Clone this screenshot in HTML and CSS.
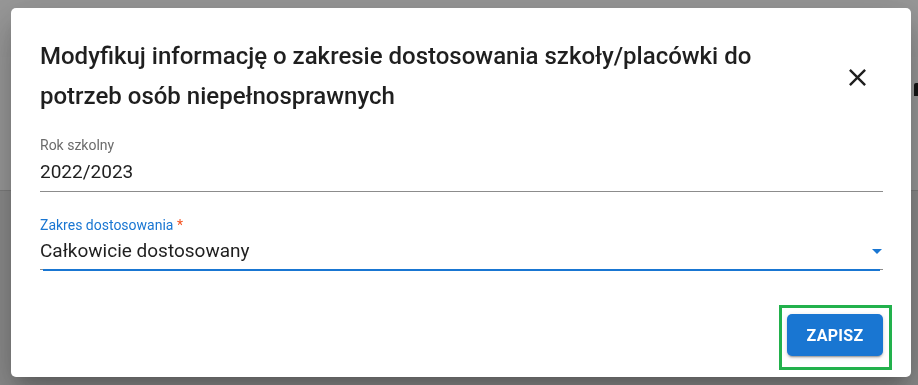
FILE: index.html
```html
<!DOCTYPE html>
<html lang="pl">
<head>
<meta charset="utf-8">
<link rel="stylesheet" href="styles.css">
</head>
<body>
<div class="page">
  <div class="page-top"></div>
  <div class="page-card"><span class="page-glyph"></span></div>
  <div class="page-rest"></div>
</div>
<div class="overlay">
  <div class="dialog">
    <div class="dialog-head">
      <h2 class="dialog-title">Modyfikuj informację o zakresie dostosowania szkoły/placówki do potrzeb osób niepełnosprawnych</h2>
      <button class="close-btn" aria-label="Zamknij">
        <svg viewBox="0 0 24 24" width="29" height="29"><path d="M19 6.41 17.59 5 12 10.59 6.41 5 5 6.41 10.59 12 5 17.59 6.41 19 12 13.41 17.59 19 19 17.59 13.41 12z" fill="#1f1f1f"/></svg>
      </button>
    </div>
    <div class="dialog-body">
      <div class="field field-readonly">
        <label class="field-label">Rok szkolny</label>
        <div class="field-value">2022/2023</div>
      </div>
      <div class="field field-focused">
        <label class="field-label">Zakres dostosowania <span class="req">*</span></label>
        <div class="field-value select-value">
          <span>Całkowicie dostosowany</span>
          <svg class="select-arrow" viewBox="0 0 24 24" width="24" height="24"><path d="M7 10l5 5 5-5z" fill="#1976d2"/></svg>
        </div>
      </div>
    </div>
    <div class="dialog-actions">
      <div class="highlight">
        <button class="btn-primary">Zapisz</button>
      </div>
    </div>
  </div>
</div>
</body>
</html>
```
FILE: styles.css
```css
html, body {
  margin: 0;
  padding: 0;
  width: 918px;
  height: 385px;
  overflow: hidden;
  font-family: Roboto, "Liberation Sans", Arial, sans-serif;
}

.page {
  display: flex;
  flex-direction: column;
  height: 385px;
  background: #f2f2f2;
}

.page-top {
  height: 57px;
  background: #fdfdfd;
}

.page-card {
  height: 133px;
  background: #ffffff;
  border-bottom: 1px solid #d0d0d0;
  display: flex;
  justify-content: flex-end;
  align-items: flex-start;
}

.page-glyph {
  width: 4px;
  height: 13px;
  margin-top: 26px;
  margin-right: 0;
  background: #222;
  border-radius: 2px 0 0 0;
}

.page-rest {
  flex: 1;
  background: #e8e8e8;
}

.overlay {
  position: fixed;
  inset: 0;
  background: rgba(0, 0, 0, 0.4);
  display: flex;
  align-items: flex-start;
  padding: 8px 0 0 11px;
}

.dialog {
  width: 900px;
  height: 369px;
  background: #fff;
  border-radius: 5px;
  box-shadow: 0 11px 15px -7px rgba(0,0,0,0.2), 0 24px 38px 3px rgba(0,0,0,0.14), 0 9px 46px 8px rgba(0,0,0,0.12);
  display: flex;
  flex-direction: column;
  box-sizing: border-box;
}

.dialog-head {
  display: flex;
  align-items: flex-start;
  padding: 28px 21px 0 29px;
}

.dialog-title {
  flex: 1;
  margin: 0;
  font-size: 24px;
  font-weight: 500;
  line-height: 40px;
  color: #1f1f1f;
  max-width: 760px;
  letter-spacing: 0;
}

.close-btn {
  border: 0;
  background: none;
  padding: 0;
  width: 40px;
  height: 40px;
  display: flex;
  align-items: center;
  justify-content: center;
  margin: 21px 13px 0 auto;
}

.dialog-body {
  padding: 21px 28px 0 29px;
  display: flex;
  flex-direction: column;
  gap: 25px;
}

.field {
  display: flex;
  flex-direction: column;
  border-bottom: 1px solid #8c8c8c;
  position: relative;
}

.field-label {
  font-size: 14px;
  line-height: 17px;
  color: #6b6b6b;
}

.field-value {
  font-size: 19px;
  line-height: 24px;
  color: #1f1f1f;
  padding: 6px 0 7px;
}

.field-focused .field-label {
  color: #1976d2;
}

.field-focused::after {
  content: "";
  position: absolute;
  left: 3px;
  right: 3px;
  bottom: -2px;
  height: 2px;
  background: #1976d2;
}

.req {
  color: #f4511e;
}

.select-value {
  display: flex;
  align-items: center;
  justify-content: space-between;
  padding: 5px 0 6px;
}

.select-arrow {
  margin: 0 -6px 0 0;
}

.dialog-actions {
  margin-top: auto;
  display: flex;
  justify-content: flex-end;
  padding: 0 19px 7px 0;
}

.highlight {
  border: 3px solid #22b14c;
  padding: 6px 6px 11px 5px;
}

.btn-primary {
  width: 96px;
  height: 42px;
  border: 0;
  border-radius: 5px;
  background: #1976d2;
  color: #fff;
  font-family: Roboto, "Liberation Sans", Arial, sans-serif;
  font-size: 16px;
  font-weight: 700;
  text-transform: uppercase;
  letter-spacing: 0.3px;
  box-shadow: 0 3px 1px -2px rgba(0,0,0,0.2), 0 2px 2px 0 rgba(0,0,0,0.14), 0 1px 5px 0 rgba(0,0,0,0.12);
}
```
